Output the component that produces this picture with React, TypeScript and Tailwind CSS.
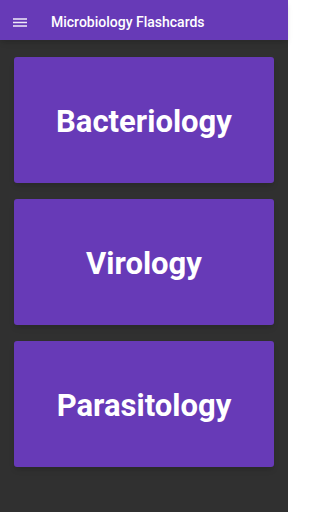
const topics = ['Bacteriology', 'Virology', 'Parasitology'];

export default function App() {
  return (
    <div className="w-[288px] h-[512px] bg-[#303030] font-['Roboto',sans-serif] flex flex-col">
      <header className="h-10 bg-[#673ab7] flex items-center px-[13px] pt-[5px] shadow-md">
        <svg width="14" height="10" viewBox="0 0 14 10" className="text-white/90">
          <path d="M0 1h14M0 4.5h14M0 8h14" stroke="currentColor" strokeWidth="1.6" />
        </svg>
        <h1 className="ml-[24px] text-white text-[14px] font-medium">Microbiology Flashcards</h1>
      </header>
      <main className="flex flex-col gap-4 px-[14px] pt-[17px]">
        {topics.map((t) => (
          <div
            key={t}
            className="h-[126px] bg-[#673ab7] rounded-[3px] shadow-md flex items-center justify-center pt-[4px]"
          >
            <span className="text-white text-[31px] font-bold">{t}</span>
          </div>
        ))}
      </main>
    </div>
  );
}
